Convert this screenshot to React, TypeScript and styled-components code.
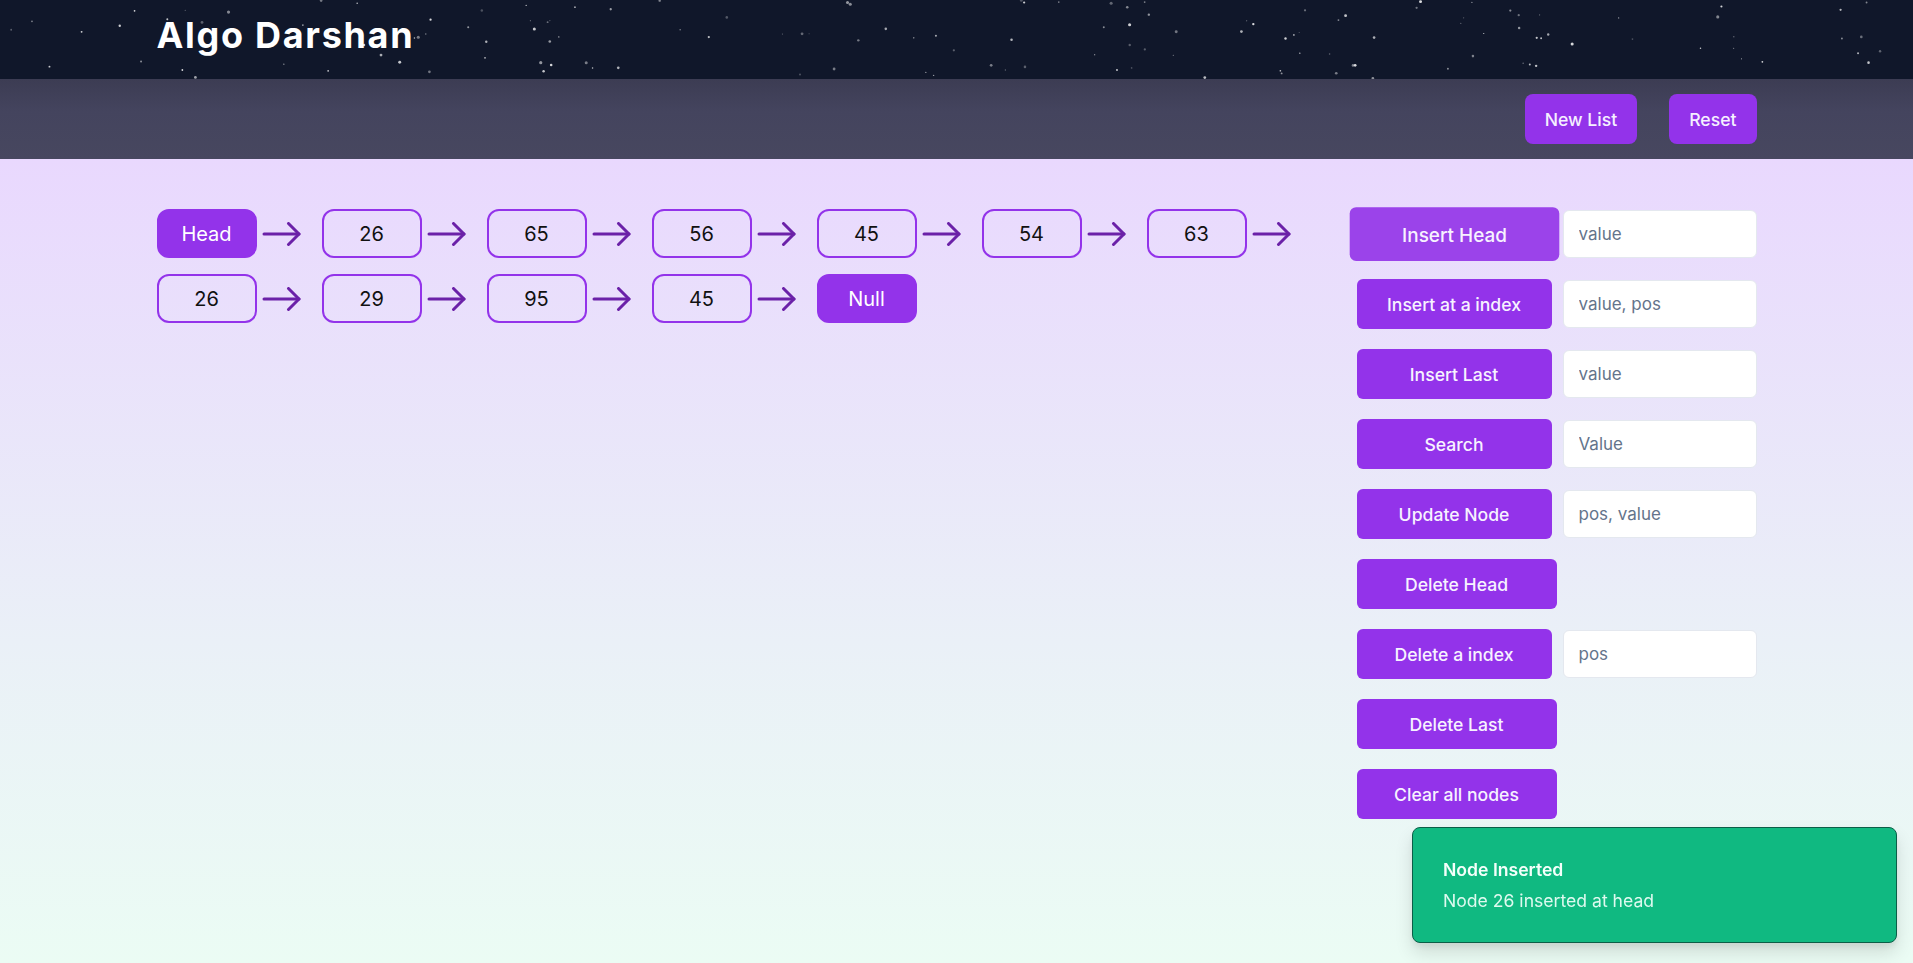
import React from "react";
import styled, { createGlobalStyle } from "styled-components";

const GlobalStyle = createGlobalStyle`
  html, body { margin: 0; padding: 0; height: 100%; }
  body { font-family: Inter, "Noto Sans", sans-serif; }
  * { box-sizing: border-box; }
  #root { min-height: 100%; }
`;

const Page = styled.div`
  min-height: 100vh;
  display: flex;
  flex-direction: column;
`;

const TopBar = styled.header`
  position: relative;
  height: 79px;
  background: #10172a;
  overflow: hidden;
`;

const Stars = styled.svg`
  position: absolute;
  inset: 0;
  width: 100%;
  height: 100%;
  pointer-events: none;
`;

const Container = styled.div`
  position: relative;
  width: 1600px;
  margin: 0 auto;
`;

const TitleWrap = styled(Container)`
  padding-top: 15px;
`;

const Title = styled.h1`
  margin: 0;
  font-family: Inter, sans-serif;
  font-size: 36px;
  line-height: 40px;
  font-weight: 700;
  letter-spacing: 1.7px;
  color: #ffffff;
`;

const SubBar = styled.div`
  height: 80px;
  background: linear-gradient(180deg, #3c3c53 0%, #44445e 40%, #47475f 100%);
`;

const SubInner = styled(Container)`
  height: 100%;
  display: flex;
  justify-content: flex-end;
  align-items: center;
  gap: 32px;
`;

const TopButton = styled.button`
  height: 50px;
  padding: 0 20px;
  border: none;
  border-radius: 8px;
  background: #9333ea;
  color: #f5f0ff;
  font-family: Inter, sans-serif;
  font-size: 17.6px;
  font-weight: 500;
  cursor: pointer;
`;

const Main = styled.main`
  flex: 1;
  background: linear-gradient(180deg, #e9d8fe 0%, #eaf0f7 60%, #ebfcf4 100%);
`;

const MainInner = styled(Container)`
  display: flex;
  gap: 32px;
  padding-top: 50px;
  padding-bottom: 40px;
`;

const ListArea = styled.div`
  flex: 1;
  display: flex;
  flex-wrap: wrap;
  align-content: flex-start;
  row-gap: 16px;
`;

const Item = styled.div`
  display: flex;
  align-items: center;
`;

const NodeBox = styled.div<{ $filled?: boolean }>`
  width: 100px;
  height: 49px;
  border-radius: 12px;
  border: 2px solid #9333ea;
  background: ${(p) => (p.$filled ? "#9333ea" : "transparent")};
  color: ${(p) => (p.$filled ? "#ffffff" : "#111111")};
  display: flex;
  align-items: center;
  justify-content: center;
  font-size: 20px;
  font-weight: 400;
`;

const ArrowWrap = styled.div`
  width: 40px;
  height: 24px;
  margin: 0 20px 0 5px;
  display: flex;
  align-items: center;
`;

const Controls = styled.div`
  flex: 0 0 400px;
  display: flex;
  flex-direction: column;
  gap: 20px;
`;

const ControlRow = styled.div`
  display: flex;
  align-items: center;
  gap: 11px;
  height: 50px;
`;

const ActionButton = styled.button<{ $active?: boolean; $solo?: boolean }>`
  flex: 0 0 auto;
  width: ${(p) => (p.$solo ? "200px" : "195px")};
  height: 50px;
  border: none;
  border-radius: 6px;
  background: ${(p) => (p.$active ? "#9b43ea" : "#9333ea")};
  color: #f7f2ff;
  font-family: Inter, sans-serif;
  font-size: 17.6px;
  font-weight: 500;
  white-space: nowrap;
  cursor: pointer;
  transform: ${(p) => (p.$active ? "scale(1.075)" : "none")};
`;

const ValueInput = styled.input`
  flex: 0 0 auto;
  width: 194px;
  height: 48px;
  border: 1px solid #e4e8ef;
  border-radius: 6px;
  background: #ffffff;
  padding: 0 15px;
  font-family: Inter, sans-serif;
  font-size: 17px;
  color: #111;
  outline: none;
  &::placeholder { color: #64748b; }
`;

const Toast = styled.div`
  position: fixed;
  right: 16px;
  bottom: 20px;
  width: 485px;
  height: 116px;
  background: #10b981;
  border: 1px solid #0b5e47;
  border-radius: 8px;
  box-shadow: 0 10px 18px rgba(0, 0, 0, 0.12), 0 4px 6px rgba(0, 0, 0, 0.06);
  padding: 30px 30px 26px;
  display: flex;
  flex-direction: column;
  gap: 6px;
  color: #ffffff;
`;

const ToastTitle = styled.div`
  font-size: 17.6px;
  line-height: 24px;
  font-weight: 600;
  color: #f4fffa;
`;

const ToastDesc = styled.div`
  font-size: 17.6px;
  line-height: 26px;
  color: rgba(240, 255, 248, 0.92);
`;

const Arrow = () => (
  <svg width="40" height="24" viewBox="0 0 40 24" fill="none">
    <path d="M2 12 H37" stroke="#6b21a8" strokeWidth="3" strokeLinecap="round" />
    <path d="M26.5 1.5 L37 12 L26.5 22.5" stroke="#6b21a8" strokeWidth="3" strokeLinecap="round" strokeLinejoin="round" />
  </svg>
);

function makeStars() {
  let seed = 12345;
  const rnd = () => {
    seed = (seed * 1103515245 + 12345) % 2147483648;
    return seed / 2147483648;
  };
  const arr: { x: number; y: number; r: number; o: number }[] = [];
  for (let i = 0; i < 140; i++) {
    arr.push({ x: rnd() * 1913, y: rnd() * 79, r: 0.5 + rnd() * 1.1, o: 0.25 + rnd() * 0.6 });
  }
  return arr;
}
const STARS = makeStars();

const values = ["26", "65", "56", "45", "54", "63", "26", "29", "95", "45"];

const controls: { label: string; placeholder?: string; active?: boolean }[] = [
  { label: "Insert Head", placeholder: "value", active: true },
  { label: "Insert at a index", placeholder: "value, pos" },
  { label: "Insert Last", placeholder: "value" },
  { label: "Search", placeholder: "Value" },
  { label: "Update Node", placeholder: "pos, value" },
  { label: "Delete Head" },
  { label: "Delete a index", placeholder: "pos" },
  { label: "Delete Last" },
  { label: "Clear all nodes" },
];

export default function App() {
  return (
    <>
      <GlobalStyle />
      <Page>
        <TopBar>
          <Stars viewBox="0 0 1913 79" preserveAspectRatio="none">
            {STARS.map((s, i) => (
              <circle key={i} cx={s.x} cy={s.y} r={s.r} fill="#ffffff" opacity={s.o} />
            ))}
          </Stars>
          <TitleWrap>
            <Title>Algo Darshan</Title>
          </TitleWrap>
        </TopBar>
        <SubBar>
          <SubInner>
            <TopButton>New List</TopButton>
            <TopButton>Reset</TopButton>
          </SubInner>
        </SubBar>
        <Main>
          <MainInner>
            <ListArea>
              <Item>
                <NodeBox $filled>Head</NodeBox>
                <ArrowWrap>
                  <Arrow />
                </ArrowWrap>
              </Item>
              {values.map((v, i) => (
                <Item key={i}>
                  <NodeBox>{v}</NodeBox>
                  <ArrowWrap>
                    <Arrow />
                  </ArrowWrap>
                </Item>
              ))}
              <Item>
                <NodeBox $filled>Null</NodeBox>
              </Item>
            </ListArea>
            <Controls>
              {controls.map((c) => (
                <ControlRow key={c.label}>
                  <ActionButton $active={c.active} $solo={!c.placeholder}>
                    {c.label}
                  </ActionButton>
                  {c.placeholder && <ValueInput placeholder={c.placeholder} />}
                </ControlRow>
              ))}
            </Controls>
          </MainInner>
        </Main>
        <Toast>
          <ToastTitle>Node Inserted</ToastTitle>
          <ToastDesc>Node 26 inserted at head</ToastDesc>
        </Toast>
      </Page>
    </>
  );
}
